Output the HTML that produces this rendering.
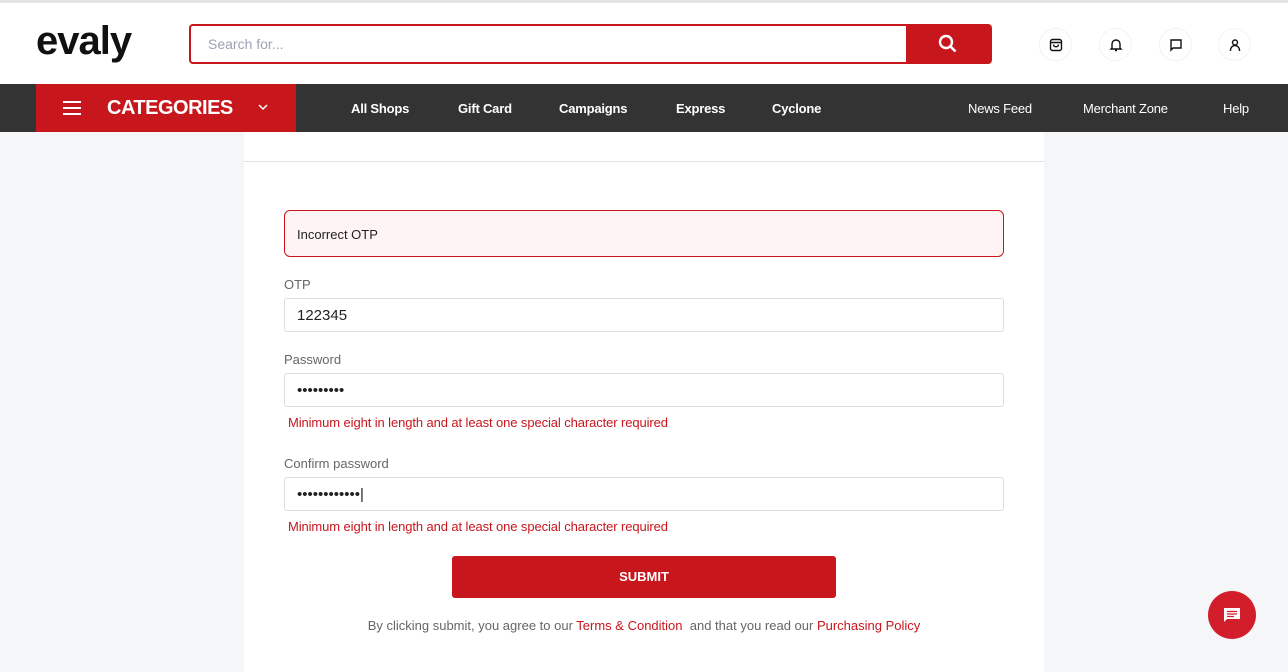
<!DOCTYPE html>
<html><head><style>
*{box-sizing:border-box;margin:0;padding:0}
body{width:1288px;height:669px;overflow:hidden;background:#f5f6f8;font-family:"Liberation Sans",sans-serif;position:relative}
.top{position:absolute;left:0;top:0;width:1288px;height:84px;background:#fff;border-top:3px solid #e4e4e4}
.logo{position:absolute;left:36px;top:18px;font-size:40px;font-weight:bold;letter-spacing:-1px;color:#111;line-height:40px}
.search{position:absolute;left:189px;top:21px;width:803px;height:40px;border:2px solid #c8161d;border-radius:4px;background:#fff}
.search span{position:absolute;left:17px;top:10px;font-size:14px;color:#9aa3b5}
.sbtn{position:absolute;right:0;top:0;width:84px;height:36px;background:#c8161d}
.ic{position:absolute;top:25px;width:33px;height:33px;border-radius:50%;border:1px solid #f2f2f2;display:flex;align-items:center;justify-content:center}
.nav{position:absolute;left:0;top:84px;width:1288px;height:48px;background:#333}
.cat{position:absolute;left:36px;top:0;width:260px;height:48px;background:#c8161d;color:#fff}
.nav a{position:absolute;top:17px;color:#fff;font-size:13px;font-weight:bold;text-decoration:none;letter-spacing:-0.2px}
.nav a.n{font-weight:normal}
.card{position:absolute;left:244px;top:132px;width:800px;height:540px;background:#fff}
.lbl{position:absolute;left:284px;font-size:13px;color:#666}
.inp{position:absolute;left:284px;width:720px;height:34px;border:1px solid #ddd;border-radius:3px;background:#fff;font-size:15px;color:#222;padding:8px 12px}
.err{position:absolute;left:288px;font-size:13px;color:#c8161d;letter-spacing:-0.1px}
</style></head><body>
<div class="top">
<div class="logo">evaly</div>
<div class="search"><span>Search for...</span><div class="sbtn"><svg width="84" height="36" viewBox="0 0 84 36"><circle cx="40" cy="16" r="6" fill="none" stroke="#fff" stroke-width="2.4"/><path d="M44.5 20.5l5 5" stroke="#fff" stroke-width="2.6"/></svg></div></div>
<div class="ic" style="left:1039px"><svg width="14" height="14" viewBox="0 0 14 14" fill="none" stroke="#111" stroke-width="1.4"><rect x="1.5" y="1.5" width="11" height="11" rx="2"/><path d="M1.5 4.5h11M4.5 6.5c0 3 5 3 5 0"/></svg></div>
<div class="ic" style="left:1099px"><svg width="14" height="14" viewBox="0 0 14 14" fill="none" stroke="#111" stroke-width="1.4"><path d="M3 10V6a4 4 0 018 0v4l1 1H2zM6 12.5h2"/></svg></div>
<div class="ic" style="left:1159px"><svg width="14" height="14" viewBox="0 0 14 14" fill="none" stroke="#111" stroke-width="1.4"><path d="M2 2h10v8H4l-2 2z"/></svg></div>
<div class="ic" style="left:1218px"><svg width="14" height="14" viewBox="0 0 14 14" fill="none" stroke="#111" stroke-width="1.4"><circle cx="7" cy="4.5" r="2.5"/><path d="M2.5 13v-1a4.5 4.5 0 019 0v1"/></svg></div>
</div>
<div class="nav">
<div class="cat"><svg style="position:absolute;left:27px;top:17px" width="18" height="14"><path d="M0 1h18M0 7h18M0 13h18" stroke="#fff" stroke-width="2"/></svg><span style="position:absolute;left:71px;top:13px;font-size:20px;font-weight:bold;letter-spacing:-0.5px">CATEGORIES</span><svg style="position:absolute;left:222px;top:20px" width="10" height="7"><path d="M1 1l4 4 4-4" stroke="#fff" fill="none" stroke-width="1.5"/></svg></div>
<a style="left:351px">All Shops</a><a style="left:458px">Gift Card</a><a style="left:559px">Campaigns</a><a style="left:676px">Express</a><a style="left:772px">Cyclone</a>
<a class="n" style="left:968px">News Feed</a><a class="n" style="left:1083px">Merchant Zone</a><a class="n" style="left:1223px">Help</a>
</div>
<div class="card"><div style="position:absolute;left:0;top:29px;width:800px;border-top:1px solid #e4e4e4"></div></div>
<div style="position:absolute;left:284px;top:210px;width:720px;height:47px;border:1px solid #c8161d;border-radius:6px;background:#fff4f4;font-size:13px;color:#222;padding:16px 12px">Incorrect OTP</div>
<div class="lbl" style="top:277px">OTP</div>
<div class="inp" style="top:298px">122345</div>
<div class="lbl" style="top:352px">Password</div>
<div class="inp" style="top:373px">•••••••••</div>
<div class="err" style="top:415px">Minimum eight in length and at least one special character required</div>
<div class="lbl" style="top:456px">Confirm password</div>
<div class="inp" style="top:477px">••••••••••••|</div>
<div class="err" style="top:519px">Minimum eight in length and at least one special character required</div>
<div style="position:absolute;left:452px;top:556px;width:384px;height:42px;background:#c8161d;border-radius:3px;color:#fff;font-size:13px;font-weight:bold;text-align:center;line-height:42px">SUBMIT</div>
<div style="position:absolute;left:244px;width:800px;top:618px;text-align:center;font-size:13px;color:#666">By clicking submit, you agree to our <span style="color:#c8161d">Terms &amp; Condition</span>&nbsp; and that you read our <span style="color:#c8161d">Purchasing Policy</span></div>
<div style="position:absolute;left:1208px;top:591px;width:48px;height:48px;border-radius:50%;background:#d21e2b;display:flex;align-items:center;justify-content:center"><svg width="18" height="18" viewBox="0 0 18 18"><path d="M1 2h16v11H4l-3 3z" fill="#fff"/><path d="M4 5.5h10M4 8h10M4 10.5h7" stroke="#d21e2b" stroke-width="1.3"/></svg></div>
</body></html>
